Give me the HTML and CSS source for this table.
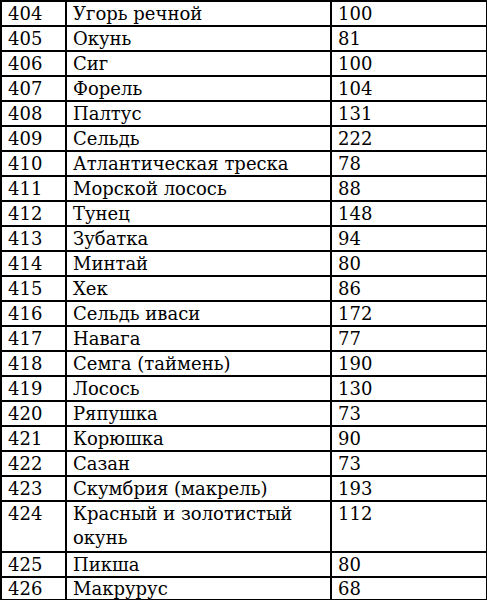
FILE: index.html
```html
<!DOCTYPE html>
<html>
<head>
<meta charset="utf-8">
<link rel="stylesheet" href="styles.css">
</head>
<body>
<table class="tbl">
<colgroup><col class="c1"><col class="c2"><col class="c3"></colgroup>
<tbody>
<tr><td>404</td><td>Угорь речной</td><td>100</td></tr>
<tr><td>405</td><td>Окунь</td><td>81</td></tr>
<tr><td>406</td><td>Сиг</td><td>100</td></tr>
<tr><td>407</td><td>Форель</td><td>104</td></tr>
<tr><td>408</td><td>Палтус</td><td>131</td></tr>
<tr><td>409</td><td>Сельдь</td><td>222</td></tr>
<tr><td>410</td><td>Атлантическая треска</td><td>78</td></tr>
<tr><td>411</td><td>Морской лосось</td><td>88</td></tr>
<tr><td>412</td><td>Тунец</td><td>148</td></tr>
<tr><td>413</td><td>Зубатка</td><td>94</td></tr>
<tr><td>414</td><td>Минтай</td><td>80</td></tr>
<tr><td>415</td><td>Хек</td><td>86</td></tr>
<tr><td>416</td><td>Сельдь иваси</td><td>172</td></tr>
<tr><td>417</td><td>Навага</td><td>77</td></tr>
<tr><td>418</td><td>Семга (таймень)</td><td>190</td></tr>
<tr><td>419</td><td>Лосось</td><td>130</td></tr>
<tr><td>420</td><td>Ряпушка</td><td>73</td></tr>
<tr><td>421</td><td>Корюшка</td><td>90</td></tr>
<tr><td>422</td><td>Сазан</td><td>73</td></tr>
<tr><td>423</td><td>Скумбрия (макрель)</td><td>193</td></tr>
<tr class="tall"><td>424</td><td>Красный и золотистый<br>окунь</td><td>112</td></tr>
<tr><td>425</td><td>Пикша</td><td>80</td></tr>
<tr class="last"><td>426</td><td>Макрурус</td><td>68</td></tr>
</tbody>
</table>
</body>
</html>
```
FILE: styles.css
```css
html, body { margin: 0; padding: 0; background: #fff; }
.tbl {
  border-collapse: collapse;
  width: 486px;
  table-layout: fixed;
  font-family: "DejaVu Serif", "Liberation Serif", serif;
  font-size: 18px;
  color: #000;
}
.c1 { width: 65px; }
.c2 { width: 265px; }
.c3 { width: 156px; }
.tbl tr { height: 25px; }
.tbl tr.tall { height: 51px; }
.tbl tr.last { height: 23px; }
.tbl td {
  border: 2px solid #000;
  padding: 1px 0 0 6px;
  line-height: 21px;
  vertical-align: top;
  white-space: nowrap;
}
.tbl tr.tall td { line-height: 24px; padding-top: 0; }
.tbl tr.last td { line-height: 20px; }
```
